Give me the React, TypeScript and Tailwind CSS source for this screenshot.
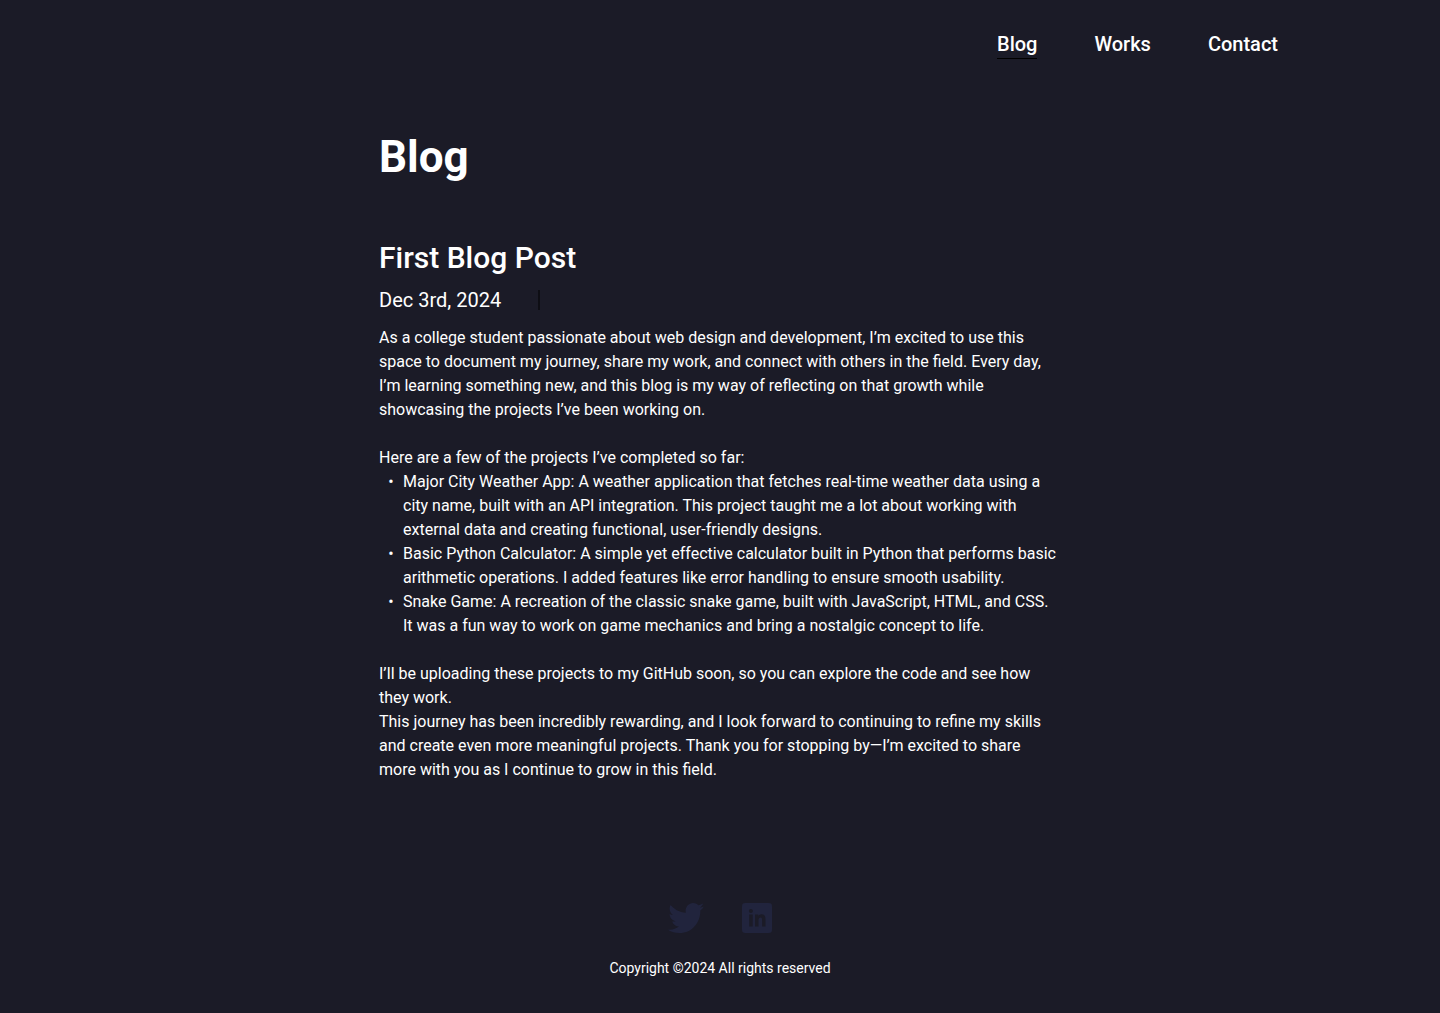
import React from "react";

const navLinks = [
  { label: "Blog", active: true },
  { label: "Works", active: false },
  { label: "Contact", active: false },
];

const projects = [
  "Major City Weather App: A weather application that fetches real-time weather data using a city name, built with an API integration. This project taught me a lot about working with external data and creating functional, user-friendly designs.",
  "Basic Python Calculator: A simple yet effective calculator built in Python that performs basic arithmetic operations. I added features like error handling to ensure smooth usability.",
  "Snake Game: A recreation of the classic snake game, built with JavaScript, HTML, and CSS. It was a fun way to work on game mechanics and bring a nostalgic concept to life.",
];

function Nav() {
  return (
    <header className="flex justify-end pt-8 pr-[162px]">
      <nav className="flex gap-[57px] text-xl leading-6 font-medium">
        {navLinks.map(({ label, active }) => (
          <a
            key={label}
            href={`#${label.toLowerCase()}`}
            className={active ? "border-b border-black pb-0.5" : "pb-0.5"}
          >
            {label}
          </a>
        ))}
      </nav>
    </header>
  );
}

function Post() {
  return (
    <article className="mt-[53px]">
      <h2 className="text-3xl leading-9 font-medium">First Blog Post</h2>
      <div className="mt-3 flex items-center gap-[37px] text-xl leading-6">
        <time dateTime="2024-12-03">Dec 3rd, 2024</time>
        <span className="h-5 w-0.5 bg-[#0e0e14]" />
      </div>
      <div className="mt-3.5 text-base leading-6">
        <p>
          As a college student passionate about web design and development, I’m excited to use this
          space to document my journey, share my work, and connect with others in the field. Every
          day, I’m learning something new, and this blog is my way of reflecting on that growth
          while showcasing the projects I’ve been working on.
        </p>
        <p className="mt-6">Here are a few of the projects I’ve completed so far:</p>
        <ul>
          {projects.map((text) => (
            <li key={text} className="flex">
              <span aria-hidden="true" className="w-6 shrink-0 text-center">•</span>
              <span>{text}</span>
            </li>
          ))}
        </ul>
        <p className="mt-6">
          I’ll be uploading these projects to my GitHub soon, so you can explore the code and see
          how they work.
        </p>
        <p>
          This journey has been incredibly rewarding, and I look forward to continuing to refine my
          skills and create even more meaningful projects. Thank you for stopping by—I’m excited to
          share more with you as I continue to grow in this field.
        </p>
      </div>
    </article>
  );
}

function Footer() {
  return (
    <footer className="mt-[121px] flex flex-col items-center pb-8">
      <div className="flex items-center gap-[38px] text-[#21243d]">
        <a href="#twitter" aria-label="Twitter">
          <svg className="h-[30px] w-9" viewBox="0 0 36 30" fill="currentColor">
            <path d="M32.3 7.5c0 .3 0 .6 0 .9C32.300 18.500 24.900 30 11.300 30 7.200 30 3.300 28.800 0 26.700c.6.1 1.200.1 1.800.1 3.400 0 6.600-1.200 9.200-3.200-3.200-.1-5.900-2.200-6.900-5.100.5.1.9.1 1.400.1.700 0 1.300-.1 2-.3C4.100 17.600 1.600 14.700 1.600 11.100V11c1 .5 2.100.9 3.300.9C2.900 10.600 1.600 8.300 1.600 5.800c0-1.400.4-2.600 1-3.700 3.700 4.500 9.100 7.400 15.200 7.700-.1-.6-.2-1.100-.2-1.700C17.600 3.600 21 0 25 0c2.100 0 4 .9 5.400 2.300 1.700-.3 3.300-.9 4.700-1.800-.6 1.700-1.700 3.200-3.300 4.100 1.500-.2 2.900-.6 4.200-1.200-1 1.600-2.300 2.900-3.700 4.100z" />
          </svg>
        </a>
        <a href="#linkedin" aria-label="LinkedIn">
          <svg className="h-[30px] w-[30px]" viewBox="0 0 30 30" fill="currentColor" fillRule="evenodd">
            <path d="M3.300 0h23.400A3.300 3.300 0 0 1 30 3.300v23.400a3.300 3.300 0 0 1-3.300 3.300H3.300A3.300 3.300 0 0 1 0 26.700V3.300A3.300 3.300 0 0 1 3.300 0zM8.900 6a2 2 0 1 0 0 4 2 2 0 0 0 0-4zM7.200 11.600v12h3.500v-12zM13 11.600v12h3.500v-6.300c0-1.700.7-2.800 2.100-2.800s1.500 1.200 1.500 2.800v6.300h3.400v-7.200c0-3.300-1-5.100-4-5.100-1.600 0-2.600.8-3.200 1.800v-1.500z" />
          </svg>
        </a>
      </div>
      <p className="mt-[25px] text-sm leading-5">Copyright ©2024 All rights reserved</p>
    </footer>
  );
}

export default function App() {
  return (
    <div className="min-h-screen bg-[#1b1b27] font-[Roboto,sans-serif] text-white">
      <Nav />
      <main className="mx-auto mt-[68px] max-w-[682px]">
        <h1 className="text-[44px] leading-[60px] font-bold">Blog</h1>
        <Post />
      </main>
      <Footer />
    </div>
  );
}
